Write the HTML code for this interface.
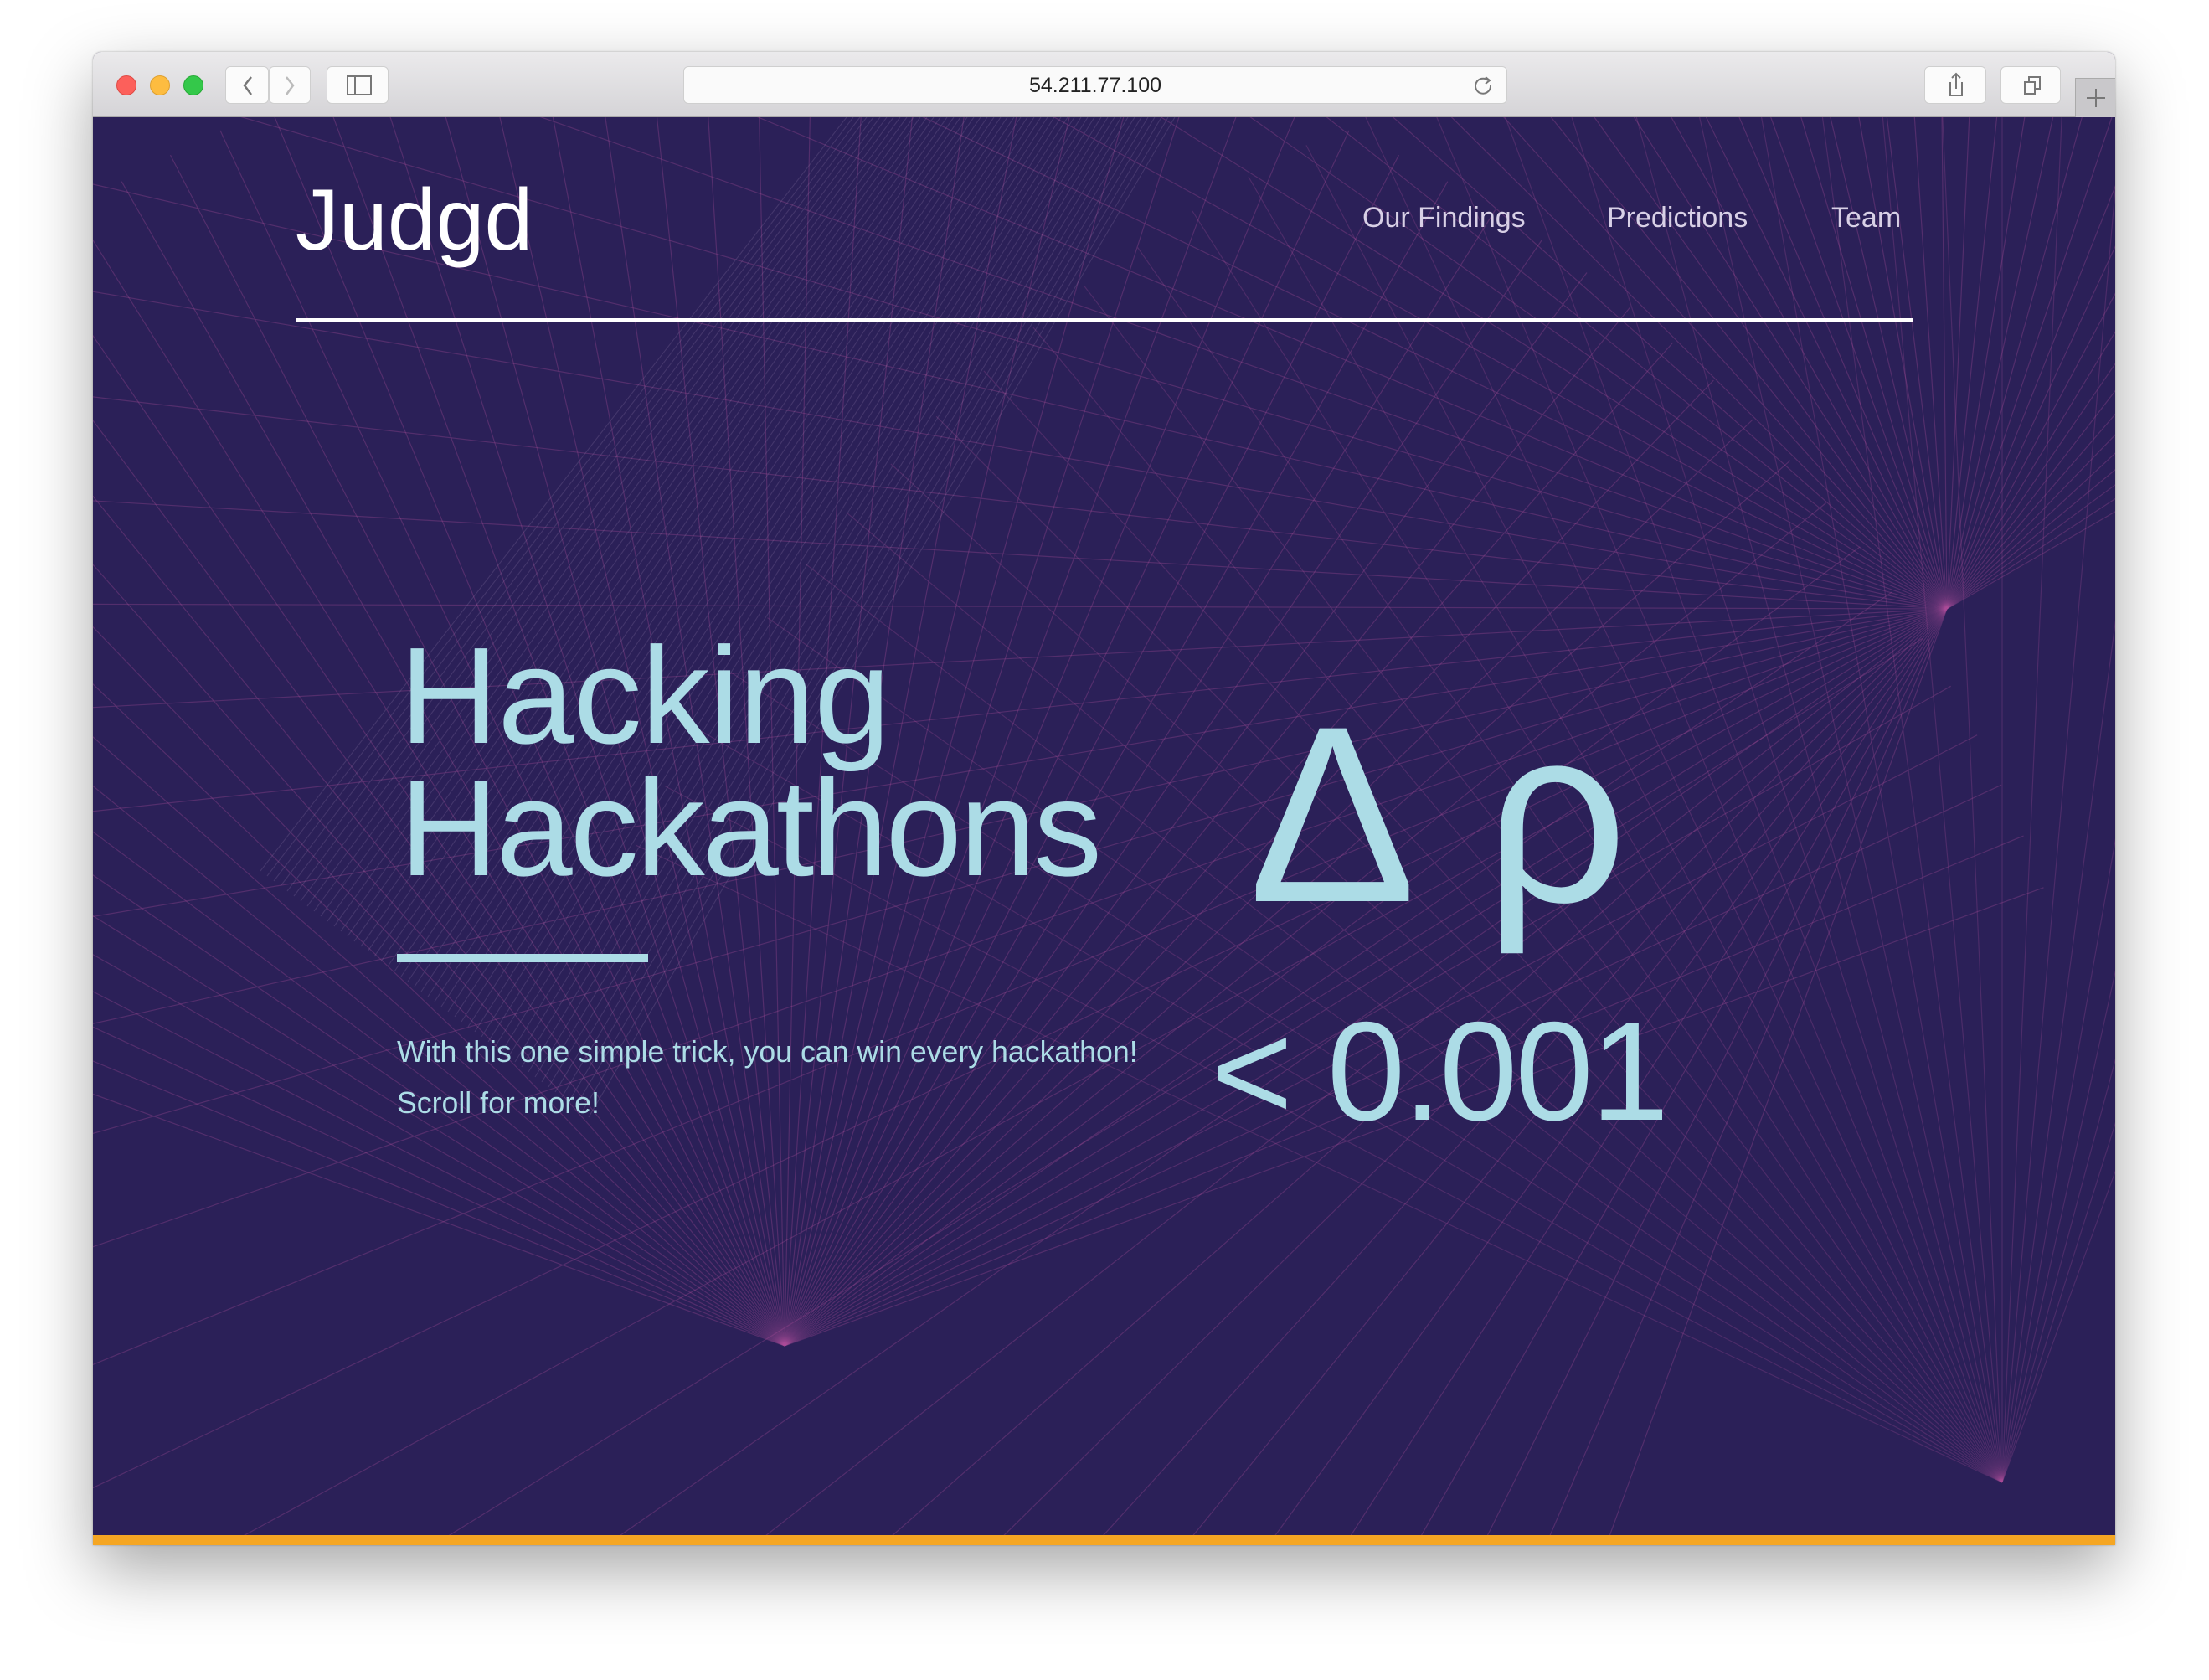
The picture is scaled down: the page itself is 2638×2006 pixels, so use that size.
<!DOCTYPE html>
<html><head><meta charset="utf-8">
<style>
html,body{margin:0;padding:0;background:#fff;width:2638px;height:2006px;overflow:hidden;font-family:"Liberation Sans",sans-serif}
.win{position:absolute;left:111px;top:62px;width:2415px;height:1783px;border-radius:10px 10px 0 0;box-shadow:0 30px 80px rgba(0,0,0,.35),0 0 2px rgba(0,0,0,.3);overflow:hidden;background:#2b2058}
.bar{position:absolute;left:0;top:0;width:100%;height:77px;background:linear-gradient(#ebeaec,#d5d4d7);border-bottom:1px solid #aaa}
.dot{position:absolute;top:28px;width:22px;height:22px;border-radius:50%}
.btn{position:absolute;top:17px;height:45px;background:#fbfbfb;border:1px solid #cfcfcf;border-radius:6px;box-sizing:border-box}
.content{position:absolute;left:0;top:78px;width:2415px;height:1693px;background:#2b2058;overflow:hidden}
.t{position:absolute;line-height:1;white-space:nowrap}
.orange{position:absolute;left:0;top:1771px;width:100%;height:12px;background:#f5a623}
</style></head><body>
<div class="win">
 <div class="bar">
  <div class="dot" style="left:28px;background:#fc605b;border:1px solid #de4a44"></div>
  <div class="dot" style="left:68px;background:#fdbc40;border:1px solid #dea030"></div>
  <div class="dot" style="left:108px;background:#34c84a;border:1px solid #27aa36"></div>
  <div class="btn" style="left:158px;width:52px"><svg width="52" height="45"><path d="M30 12 L22 22 L30 33" stroke="#777" stroke-width="2.5" fill="none"/></svg></div>
  <div class="btn" style="left:210px;width:50px"><svg width="50" height="45"><path d="M20 12 L28 22 L20 33" stroke="#bbb" stroke-width="2.5" fill="none"/></svg></div>
  <div class="btn" style="left:279px;width:74px"><svg width="74" height="45"><rect x="24" y="11" width="28" height="22" stroke="#777" stroke-width="2" fill="none"/><line x1="33" y1="11" x2="33" y2="33" stroke="#777" stroke-width="2"/></svg></div>
  <div class="btn" style="left:705px;width:984px;background:#fafafa"><div class="t" style="left:0;width:100%;text-align:center;top:10px;font-size:25px;color:#222">54.211.77.100</div>
   <svg style="position:absolute;right:12px;top:8px" width="30" height="30"><path d="M20 8 A9 9 0 1 0 23 14" stroke="#777" stroke-width="2" fill="none"/><path d="M17 4 L22 8 L17 12" stroke="#777" stroke-width="2" fill="none"/></svg></div>
  <div class="btn" style="left:2187px;width:74px"><svg width="74" height="45"><path d="M30 18 V34 H44 V18 M37 8 V26 M32 13 L37 8 L42 13" stroke="#777" stroke-width="2" fill="none"/></svg></div>
  <div class="btn" style="left:2278px;width:72px"><svg width="72" height="45"><rect x="28" y="18" width="12" height="14" stroke="#777" stroke-width="2" fill="none"/><path d="M33 18 V12 H46 V26 H40" stroke="#777" stroke-width="2" fill="none"/></svg></div>
  <div style="position:absolute;left:2367px;top:31px;width:48px;height:46px;background:#c9c8cb;border-left:1px solid #aaa;border-top:1px solid #aaa"><svg width="48" height="46"><path d="M24 12 V34 M13 23 H35" stroke="#777" stroke-width="2"/></svg></div>
 </div>
 <div class="content">
  <svg id="bg" width="2415" height="1693" style="position:absolute;left:0;top:0"></svg>
  <div class="t" style="left:242px;top:71px;font-size:104px;color:#fff">Judgd</div>
  <div class="t" style="left:1516px;top:103px;font-size:34px;color:#d8d0e6">Our Findings</div>
  <div class="t" style="left:1808px;top:103px;font-size:34px;color:#d8d0e6">Predictions</div>
  <div class="t" style="left:2076px;top:103px;font-size:34px;color:#d8d0e6">Team</div>
  <div style="position:absolute;left:242px;top:240px;width:1931px;height:4px;background:#fff"></div>
  <div class="t" style="left:366px;top:609px;font-size:164px;color:#acdce6;letter-spacing:-1px">Hacking</div>
  <div class="t" style="left:366px;top:767px;font-size:164px;color:#acdce6;letter-spacing:-3px">Hackathons</div>
  <div style="position:absolute;left:363px;top:999px;width:300px;height:10px;background:#acdce6"></div>
  <div class="t" style="left:363px;top:1099px;font-size:35.7px;color:#acdce6">With this one simple trick, you can win every hackathon!</div>
  <div class="t" style="left:363px;top:1160px;font-size:35.7px;color:#acdce6">Scroll for more!</div>
  <div class="t" style="left:1380px;top:682px;font-size:300px;color:#acdce6">Δ</div>
  <div class="t" style="left:1662px;top:682px;font-size:300px;color:#acdce6">ρ</div>
  <div class="t" style="left:1335px;top:1055px;font-size:168px;color:#acdce6;letter-spacing:-3px">&lt; 0.001</div>
 </div>
 <div class="orange"></div>
</div>
<script>
(function(){
var s=document.getElementById('bg'),h='';
function fan(cx,cy,a0,a1,n,len,op){
 for(var i=0;i<n;i++){var a=(a0+(a1-a0)*i/(n-1))*Math.PI/180;
  var x2=cx+Math.cos(a)*len,y2=cy+Math.sin(a)*len;
  h+='<line x1="'+cx+'" y1="'+cy+'" x2="'+x2.toFixed(1)+'" y2="'+y2.toFixed(1)+'" stroke="#b0519c" stroke-opacity="'+op+'" stroke-width="1.2"/>';}
}
fan(2214,587,110,330,70,2600,0.3);
fan(826,1467,200,340,60,1600,0.3);
fan(2280,1630,205,290,35,1800,0.25);
for(var i=0;i<50;i++){var x=900+i*8;h+='<line x1="'+x+'" y1="0" x2="'+(x-700)+'" y2="'+(900+i*6)+'" stroke="#a890c0" stroke-opacity="0.2" stroke-width="1.1"/>';}
s.innerHTML=h;})();
</script>
</body></html>
